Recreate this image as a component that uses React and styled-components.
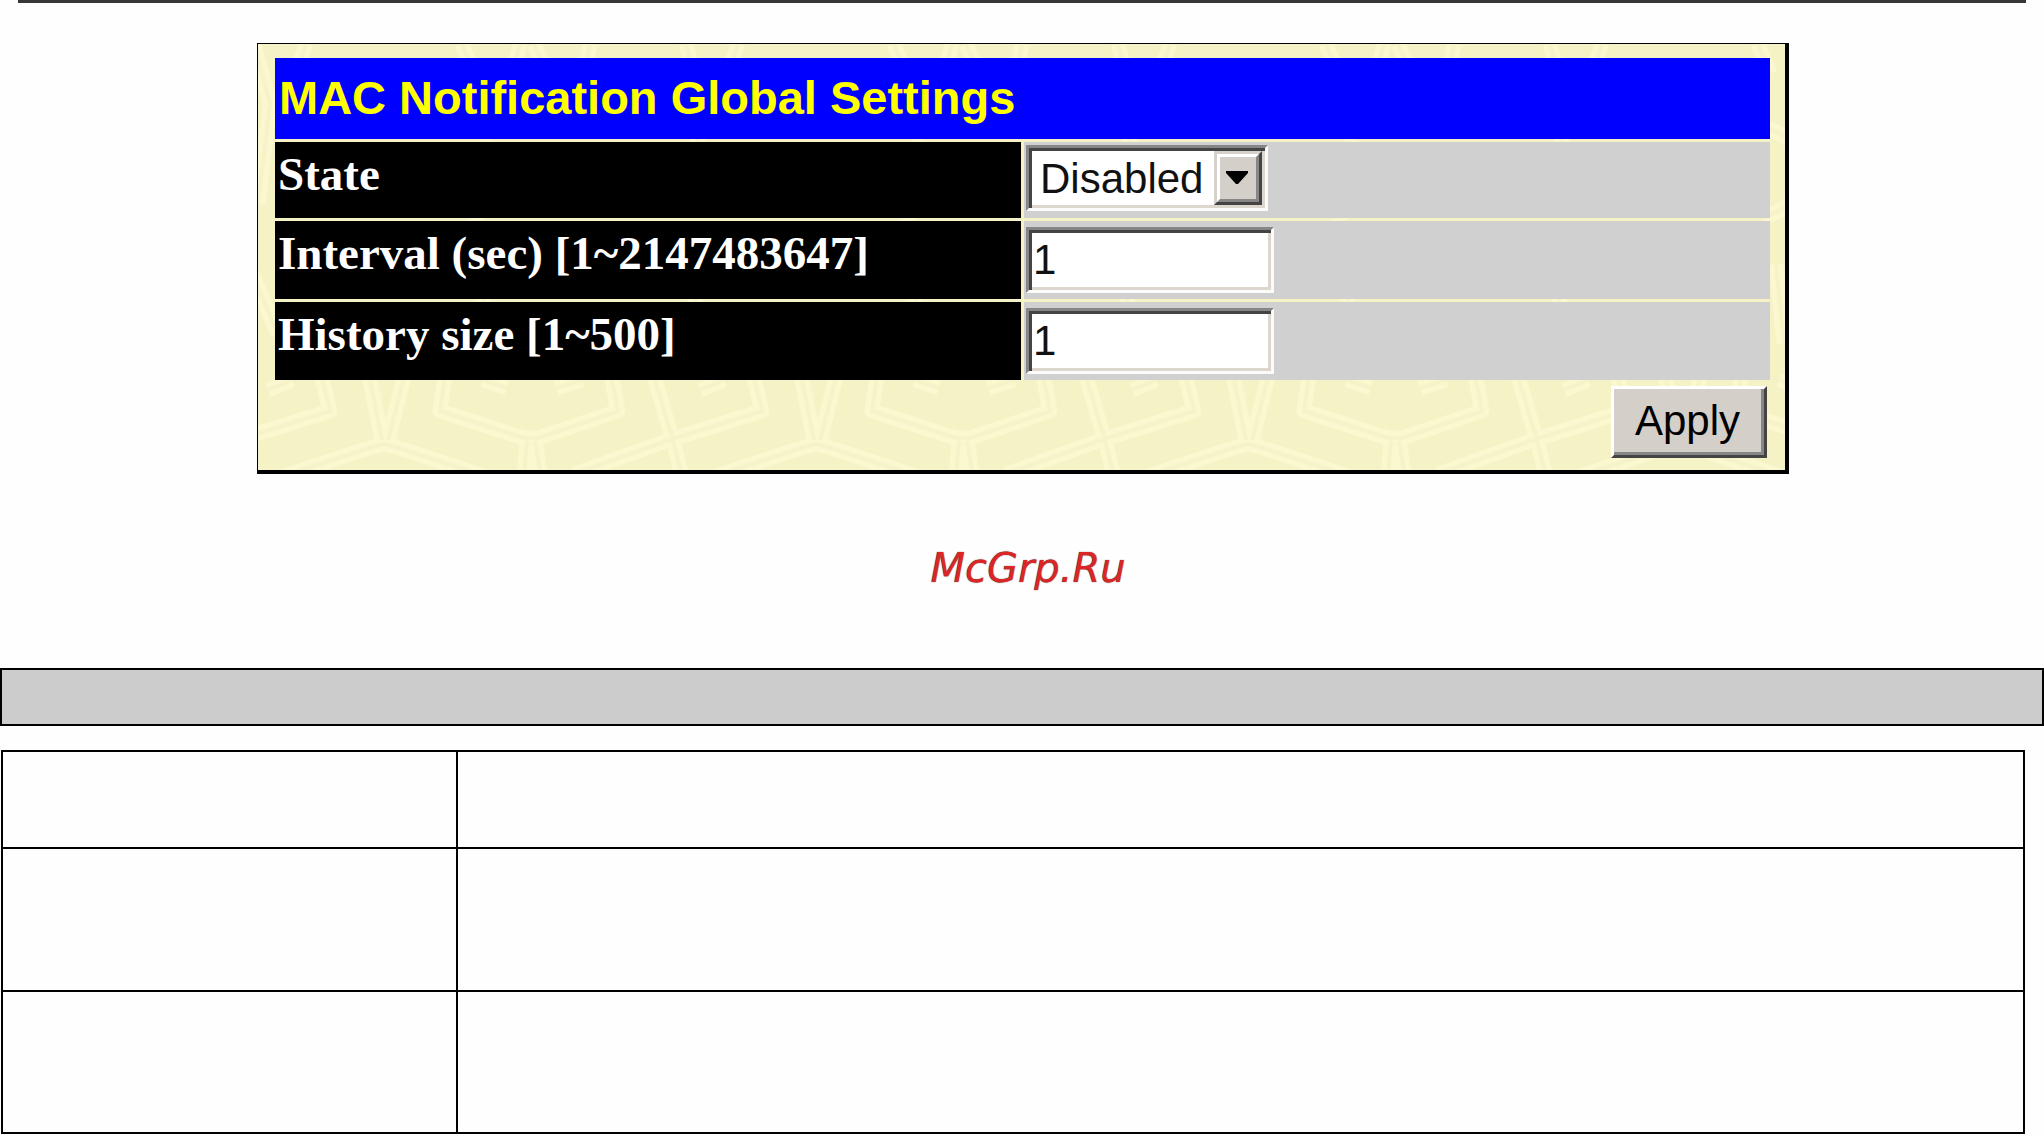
import React, { useState } from 'react';
import styled, { createGlobalStyle } from 'styled-components';

const GlobalStyle = createGlobalStyle`
  body {
    margin: 0;
    background: #fefefe;
    color: #000;
    font-family: "Liberation Sans", Arial, sans-serif;
  }
  * {
    box-sizing: border-box;
  }
`;

const TILE_LINES = [
  'M22 326 L4 396 M-16 326 L-2 396',
  'M454 326 L436 396 M416 326 L430 396',
  'M-100 432 L-12 403 L0 400 L12 403 L100 432',
  'M332 432 L420 403 L432 400 L444 403 L532 432',
  'M62 326 L56 367 L140 394 L154 394 L234 367 L226 326',
  'M140 432 L143 397',
  'M157 432 L151 397',
  'M268 326 L288 393 L298 432',
  'M368 326 L378 367 L288 395 L190 430',
  'M99 336 L123 344',
  'M198 336 L172 344',
  'M340 336 L316 346',
  'M78 0 L90 30',
  'M136 0 L128 30',
  'M150 0 L164 30',
  'M206 0 L200 30',
  'M302 0 L318 60 L306 160',
  'M354 0 L344 30',
  'M300 230 L326 290',
  'M80 80 L112 96',
  'M80 176 L112 160',
  'M96 220 L104 300',
];

const Pattern = () => {
  return (
    <PatternSvg aria-hidden="true">
      <defs>
        <pattern id="tile" x="126" y="0" width="432" height="432" patternUnits="userSpaceOnUse">
          <rect width="432" height="432" fill="#f5f2c5" />
          <g fill="none" stroke="#fbf8d0" strokeWidth="15" strokeLinejoin="round">
            {TILE_LINES.map((d) => <path key={d} d={d} />)}
          </g>
          <g fill="none" stroke="#f6f3c9" strokeWidth="4" strokeLinejoin="round">
            {TILE_LINES.map((d) => <path key={d} d={d} />)}
          </g>
        </pattern>
      </defs>
      <rect width="100%" height="100%" fill="url(#tile)" />
    </PatternSvg>
  );
};

const App = () => {
  const [state, setState] = useState('Disabled');
  const [interval, setIntervalValue] = useState('1');
  const [history, setHistory] = useState('1');

  return (
    <>
      <GlobalStyle />
      <TopRule />
      <Panel onSubmit={(e) => e.preventDefault()}>
        <Pattern />
        <SettingsTable>
          <thead>
            <tr>
              <Title colSpan="2">MAC Notification Global Settings</Title>
            </tr>
          </thead>
          <tbody>
            <tr>
              <NameCell $height={76}><label htmlFor="state">State</label></NameCell>
              <ValueCell $top={3}>
                <SelectBox>
                  <Select id="state" value={state} onChange={(e) => setState(e.target.value)}>
                    <option>Disabled</option>
                    <option>Enabled</option>
                  </Select>
                  <Arrow viewBox="0 0 48 54" aria-hidden="true">
                    <path fill="#444" d="M0 0h48v54H0z" />
                    <path fill="#d6d1ca" d="M0 0h48l-3 3v48H3l-3 3z" />
                    <path fill="#868686" d="M3 3h42v48H3z" />
                    <path fill="#fff" d="M3 3h42l-3 3v42H6l-3 3z" />
                    <path fill="#d4cfc8" d="M6 6h36v42H6z" />
                    <path fill="#000" d="M12 20h22v2L24 33h-2L12 22z" />
                  </Arrow>
                </SelectBox>
              </ValueCell>
            </tr>
            <tr>
              <NameCell $height={78}>
                <label htmlFor="interval">Interval (sec) [1~2147483647]</label>
              </NameCell>
              <ValueCell $top={6}>
                <TextInput
                  id="interval"
                  type="text"
                  value={interval}
                  onChange={(e) => setIntervalValue(e.target.value)}
                />
              </ValueCell>
            </tr>
            <tr>
              <NameCell $height={78}>
                <label htmlFor="history">History size [1~500]</label>
              </NameCell>
              <ValueCell $top={6}>
                <TextInput
                  id="history"
                  type="text"
                  value={history}
                  onChange={(e) => setHistory(e.target.value)}
                />
              </ValueCell>
            </tr>
          </tbody>
        </SettingsTable>
        <Actions>
          <ApplyButton type="submit">Apply</ApplyButton>
        </Actions>
      </Panel>

      <SiteMark>McGrp.Ru</SiteMark>

      <HeadingBar />
      <ParamTable>
        <tbody>
          <ParamRow $height={97}><td /><td /></ParamRow>
          <ParamRow $height={143}><td /><td /></ParamRow>
          <ParamRow $height={142}><td /><td /></ParamRow>
        </tbody>
      </ParamTable>
    </>
  );
};

const TopRule = styled.div`
  height: 3px;
  margin: 0 18px;
  background: #383636;
`;

const Panel = styled.form`
  position: relative;
  isolation: isolate;
  margin: 40px 255px 0 257px;
  padding: 11px 12px 12px 14px;
  border: solid #000;
  border-width: 1px 4px 4px 1px;
`;

const PatternSvg = styled.svg`
  position: absolute;
  top: 0;
  left: 0;
  width: 100%;
  height: 100%;
  z-index: -1;
`;

const SettingsTable = styled.table`
  width: 100%;
  table-layout: fixed;
  border-collapse: separate;
  border-spacing: 3px;
`;

const Title = styled.th`
  height: 81px;
  padding: 0 4px 2px;
  background: #0000ff;
  color: #ffff00;
  font-size: 47px;
  line-height: 54px;
  text-align: left;
`;

const NameCell = styled.td`
  height: ${(props) => props.$height}px;
  padding: 5px 3px 0;
  background: #000;
  color: #fff;
  font-family: "Liberation Serif", "Times New Roman", serif;
  font-size: 47px;
  font-weight: bold;
  line-height: 54px;
  vertical-align: top;
`;

const ValueCell = styled.td`
  padding: ${(props) => props.$top}px 2px 0;
  background: #d0d0d0;
  vertical-align: top;
`;

const SelectBox = styled.div`
  position: relative;
  width: 242px;
  height: 66px;
`;

const sunken = `
  display: block;
  border: 3px solid;
  border-color: #868686 #fbfbfb #fbfbfb #868686;
  border-radius: 0;
  outline: none;
  background: #fff;
  box-shadow: inset 3px 3px #444, inset -3px -3px #dcd6cf;
  color: #111;
  font-family: "Liberation Sans", Arial, sans-serif;
  font-size: 42px;
`;

const Select = styled.select`
  ${sunken}
  appearance: none;
  width: 100%;
  height: 100%;
  padding: 0 50px 0 11px;
`;

const Arrow = styled.svg`
  position: absolute;
  top: 6px;
  right: 6px;
  width: 48px;
  height: 54px;
  pointer-events: none;
`;

const TextInput = styled.input`
  ${sunken}
  width: 248px;
  height: 66px;
  padding: 0 4px;
`;

const Actions = styled.div`
  display: flex;
  justify-content: flex-end;
  padding: 3px 6px 0 0;
`;

const ApplyButton = styled.button`
  width: 156px;
  height: 72px;
  padding: 0 3px 3px 0;
  border: 3px solid;
  border-color: #fff #444 #444 #fff;
  border-radius: 0;
  background: #d4cfc8;
  box-shadow: inset -3px -3px #868686;
  color: #000;
  font-family: "Liberation Sans", Arial, sans-serif;
  font-size: 42px;
`;

const SiteMark = styled.p`
  margin: 74px 0 80px;
  padding-left: 12px;
  color: #dc2626;
  font-family: "DejaVu Sans", sans-serif;
  font-size: 40px;
  font-style: italic;
  line-height: 40px;
  text-align: center;
  text-shadow: 0 0 1px #222;
`;

const HeadingBar = styled.div`
  height: 58px;
  border: 2px solid #000;
  background: #ccc;
`;

const ParamTable = styled.table`
  width: calc(100% - 20px);
  margin: 24px 19px 0 1px;
  table-layout: fixed;
  border-collapse: collapse;

  td {
    padding: 0;
    border: 2px solid #000;
  }
  td:first-child {
    width: 22.5%;
  }
`;

const ParamRow = styled.tr`
  height: ${(props) => props.$height}px;
`;

export default App;
